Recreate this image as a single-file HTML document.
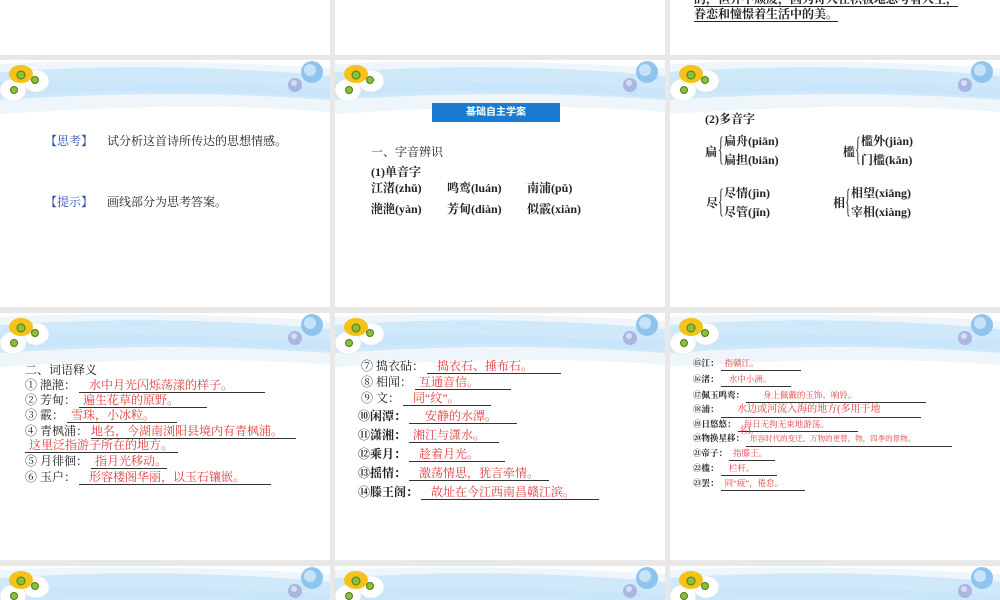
<!DOCTYPE html>
<html><head><meta charset="utf-8"><style>
*{margin:0;padding:0;box-sizing:border-box}
html{width:1000px;height:600px;overflow:hidden}
body{width:1000px;height:600px;overflow:hidden;background:#e8e8e8;position:relative;font-family:"Liberation Serif","Noto Serif CJK SC",serif;color:#222}
.s{position:absolute;width:330px;height:247px;background:#fff;overflow:hidden}
.s svg{position:absolute;left:0;top:0}
.t{position:absolute;white-space:nowrap;font-size:12px;line-height:16px}
.b{font-weight:bold}
.r{color:#e03a3a}
.u{display:inline-block;border-bottom:1px solid #333;line-height:14px;padding-left:4px}
.sm{font-size:8.5px;line-height:12px}
.br{position:absolute;font-size:34px;font-weight:normal;line-height:34px;transform:scaleX(.35);transform-origin:left top;color:#333}
</style></head><body>
<svg width="0" height="0" style="position:absolute"><defs>
<g id="hd">
<rect x="0" y="0" width="330" height="60" fill="#fff"/>
<path d="M0 4 C80 0 200 0 330 8 L330 52 C230 44 120 46 0 54 Z" fill="#eef6fc"/>
<path d="M0 12 C90 6 200 4 330 16 L330 40 C220 32 120 32 0 40 Z" fill="#d0e9fa"/>
<path d="M0 22 C100 18 220 24 330 28 L330 38 C220 30 120 28 0 36 Z" fill="#c6e3f8" opacity=".7"/>
<g fill="#fff" stroke="#dde6e6" stroke-width=".6">
<ellipse cx="36" cy="21" rx="13" ry="11"/><ellipse cx="13" cy="30" rx="13" ry="11"/></g>
<g fill="#f5c21a"><ellipse cx="21" cy="14" rx="12" ry="9"/></g>
<circle cx="21" cy="15" r="4" fill="#8bbf3a" stroke="#4e7a18"/>
<circle cx="35" cy="20" r="3.5" fill="#8bbf3a" stroke="#4e7a18"/>
<circle cx="14" cy="30" r="3.5" fill="#8bbf3a" stroke="#4e7a18"/>
<circle cx="312" cy="12" r="11" fill="#8fc4ee"/><circle cx="310" cy="10" r="6" fill="#c6e3fa"/>
<circle cx="295" cy="25" r="7" fill="#a9b6e0"/><circle cx="294" cy="23" r="3" fill="#d6ddf4"/>
</g></defs></svg>

<!-- row 1 partial -->
<div class="s" style="left:0;top:-192px"></div>
<div class="s" style="left:335px;top:-192px"></div>
<div class="s" style="left:670px;top:-192px"></div>
<div class="t b" style="left:694px;top:-9px;font-size:12px"><span style="border-bottom:1px solid #222">的，但并不颓废，因为诗人在积极地思考着人生，</span></div>
<div class="t b" style="left:694px;top:6px;font-size:12px"><span style="border-bottom:1px solid #222">眷恋和憧憬着生活中的美。</span></div>

<!-- row 2 -->
<div class="s" style="left:0;top:60px"><svg width="330" height="60"><use href="#hd"/></svg></div>
<div class="s" style="left:335px;top:60px"><svg width="330" height="60"><use href="#hd"/></svg></div>
<div class="s" style="left:670px;top:60px"><svg width="330" height="60"><use href="#hd"/></svg></div>

<div class="t" style="left:45px;top:133px;color:#2a4fa8">【思考】</div>
<div class="t" style="left:107px;top:133px">试分析这首诗所传达的思想情感。</div>
<div class="t" style="left:45px;top:194px;color:#2a4fa8">【提示】</div>
<div class="t" style="left:107px;top:194px">画线部分为思考答案。</div>

<div style="position:absolute;left:432px;top:103px;width:128px;height:19px;background:#1b7bd0;color:#fff;font-family:'Liberation Sans','Noto Sans CJK SC',sans-serif;font-size:10px;font-weight:bold;text-align:center;line-height:19px">基础自主学案</div>
<div class="t" style="left:371px;top:144px">一、字音辨识</div>
<div class="t b" style="left:371px;top:164px">(1)单音字</div>
<div class="t b" style="left:371px;top:180px">江渚(zhǔ)</div>
<div class="t b" style="left:447px;top:180px">鸣鸾(luán)</div>
<div class="t b" style="left:527px;top:180px">南浦(pǔ)</div>
<div class="t b" style="left:371px;top:201px">滟滟(yàn)</div>
<div class="t b" style="left:447px;top:201px">芳甸(diàn)</div>
<div class="t b" style="left:527px;top:201px">似霰(xiàn)</div>

<div class="t b" style="left:705px;top:111px">(2)多音字</div>
<div class="t b" style="left:705px;top:144px">扁</div><div class="br" style="left:718px;top:133px">{</div>
<div class="t b" style="left:724px;top:133px">扁舟(piān)</div>
<div class="t b" style="left:724px;top:152px">扁担(biān)</div>
<div class="t b" style="left:843px;top:144px">槛</div><div class="br" style="left:855px;top:133px">{</div>
<div class="t b" style="left:861px;top:133px">槛外(jiàn)</div>
<div class="t b" style="left:861px;top:152px">门槛(kǎn)</div>
<div class="t b" style="left:706px;top:195px">尽</div><div class="br" style="left:718px;top:185px">{</div>
<div class="t b" style="left:724px;top:185px">尽情(jìn)</div>
<div class="t b" style="left:724px;top:204px">尽管(jǐn)</div>
<div class="t b" style="left:833px;top:195px">相</div><div class="br" style="left:845px;top:185px">{</div>
<div class="t b" style="left:851px;top:185px">相望(xiāng)</div>
<div class="t b" style="left:851px;top:204px">宰相(xiàng)</div>

<!-- row 3 -->
<div class="s" style="left:0;top:313px"><svg width="330" height="60"><use href="#hd"/></svg></div>
<div class="s" style="left:335px;top:313px"><svg width="330" height="60"><use href="#hd"/></svg></div>
<div class="s" style="left:670px;top:313px"><svg width="330" height="60"><use href="#hd"/></svg></div>

<div class="t" style="left:25px;top:362px">二、词语释义</div>
<div class="t" style="left:25px;top:377px">① 滟滟： <span class="u r" style="width:186px">&nbsp;&nbsp;水中月光闪烁荡漾的样子。</span></div>
<div class="t" style="left:25px;top:392px">② 芳甸： <span class="u r" style="width:128px">遍生花草的原野。</span></div>
<div class="t" style="left:25px;top:407px">③ 霰： <span class="u r" style="width:110px">雪珠，小冰粒。</span></div>
<div class="t" style="left:25px;top:423px">④ 青枫浦： <span class="r" style="display:inline-block;border-bottom:1px solid #333;line-height:14px;width:205px">地名，今湖南浏阳县境内有青枫浦。</span></div>
<div class="t" style="left:25px;top:437px"><span class="u r" style="width:153px">这里泛指游子所在的地方。</span></div>
<div class="t" style="left:25px;top:453px">⑤ 月徘徊： <span class="u r" style="width:76px">指月光移动。</span></div>
<div class="t" style="left:25px;top:469px">⑥ 玉户： <span class="u r" style="width:192px">&nbsp;&nbsp;形容楼阁华丽，以玉石镶嵌。</span></div>

<div class="t" style="left:361px;top:358px">⑦ 捣衣砧： <span class="u r" style="width:134px">&nbsp;&nbsp;捣衣石、捶布石。</span></div>
<div class="t" style="left:361px;top:374px">⑧ 相闻： <span class="u r" style="width:96px">互通音信。</span></div>
<div class="t" style="left:361px;top:390px">⑨ 文： <span class="u r" style="width:88px">&nbsp;&nbsp;同“纹”。</span></div>
<div class="t b" style="left:358px;top:408px">⑩闲潭： <span class="u r" style="width:108px;font-weight:normal">&nbsp;&nbsp;&nbsp;&nbsp;安静的水潭。</span></div>
<div class="t b" style="left:358px;top:427px">⑪潇湘： <span class="u r" style="width:90px;font-weight:normal">湘江与潇水。</span></div>
<div class="t b" style="left:358px;top:446px">⑫乘月： <span class="u r" style="width:96px;font-weight:normal">&nbsp;&nbsp;趁着月光。</span></div>
<div class="t b" style="left:358px;top:465px">⑬摇情： <span class="u r" style="width:140px;font-weight:normal">&nbsp;&nbsp;激荡情思，犹言牵情。</span></div>
<div class="t b" style="left:358px;top:484px">⑭滕王阁： <span class="u r" style="width:178px;font-weight:normal">&nbsp;&nbsp;故址在今江西南昌赣江滨。</span></div>

<div class="t sm b" style="left:693px;top:356px">⑮江： <span class="u r" style="width:80px;font-weight:normal">指赣江。</span></div>
<div class="t sm b" style="left:693px;top:372px">⑯渚： <span class="u r" style="width:70px;font-weight:normal">&nbsp;&nbsp;水中小洲。</span></div>
<div class="t sm b" style="left:693px;top:388px">⑰佩玉鸣鸾： <span class="u r" style="width:180px;font-weight:normal">&nbsp;&nbsp;&nbsp;&nbsp;&nbsp;&nbsp;身上佩戴的玉饰、响铃。</span></div>
<div class="t sm b" style="left:693px;top:403px">⑱浦： <span class="u r" style="width:200px;font-weight:normal;font-size:10px">&nbsp;&nbsp;&nbsp;&nbsp;&nbsp;水边或河流入海的地方(多用于地</span></div>
<div class="t sm b" style="left:693px;top:417px">⑲日悠悠： <span class="u r" style="width:120px;font-weight:normal">&nbsp;每日无拘无束地游荡。</span></div>
<div class="t sm r" style="left:739px;top:424px">名)。</div>
<div class="t sm b" style="left:693px;top:432px">⑳物换星移： <span class="u r" style="width:206px;font-weight:normal;font-size:7.5px">形容时代的变迁、万物的更替。物，四季的景物。</span></div>
<div class="t sm b" style="left:693px;top:446px">㉑帝子： <span class="u r" style="width:46px;font-weight:normal">指滕王。</span></div>
<div class="t sm b" style="left:693px;top:461px">㉒槛： <span class="u r" style="width:56px;font-weight:normal">&nbsp;&nbsp;栏杆。</span></div>
<div class="t sm b" style="left:693px;top:476px">㉓罢： <span class="u r" style="width:84px;font-weight:normal">同“疲”，倦怠。</span></div>

<!-- row 4 -->
<div class="s" style="left:0;top:566px;height:34px"><svg width="330" height="60"><use href="#hd"/></svg></div>
<div class="s" style="left:335px;top:566px;height:34px"><svg width="330" height="60"><use href="#hd"/></svg></div>
<div class="s" style="left:670px;top:566px;height:34px"><svg width="330" height="60"><use href="#hd"/></svg></div>
</body></html>
